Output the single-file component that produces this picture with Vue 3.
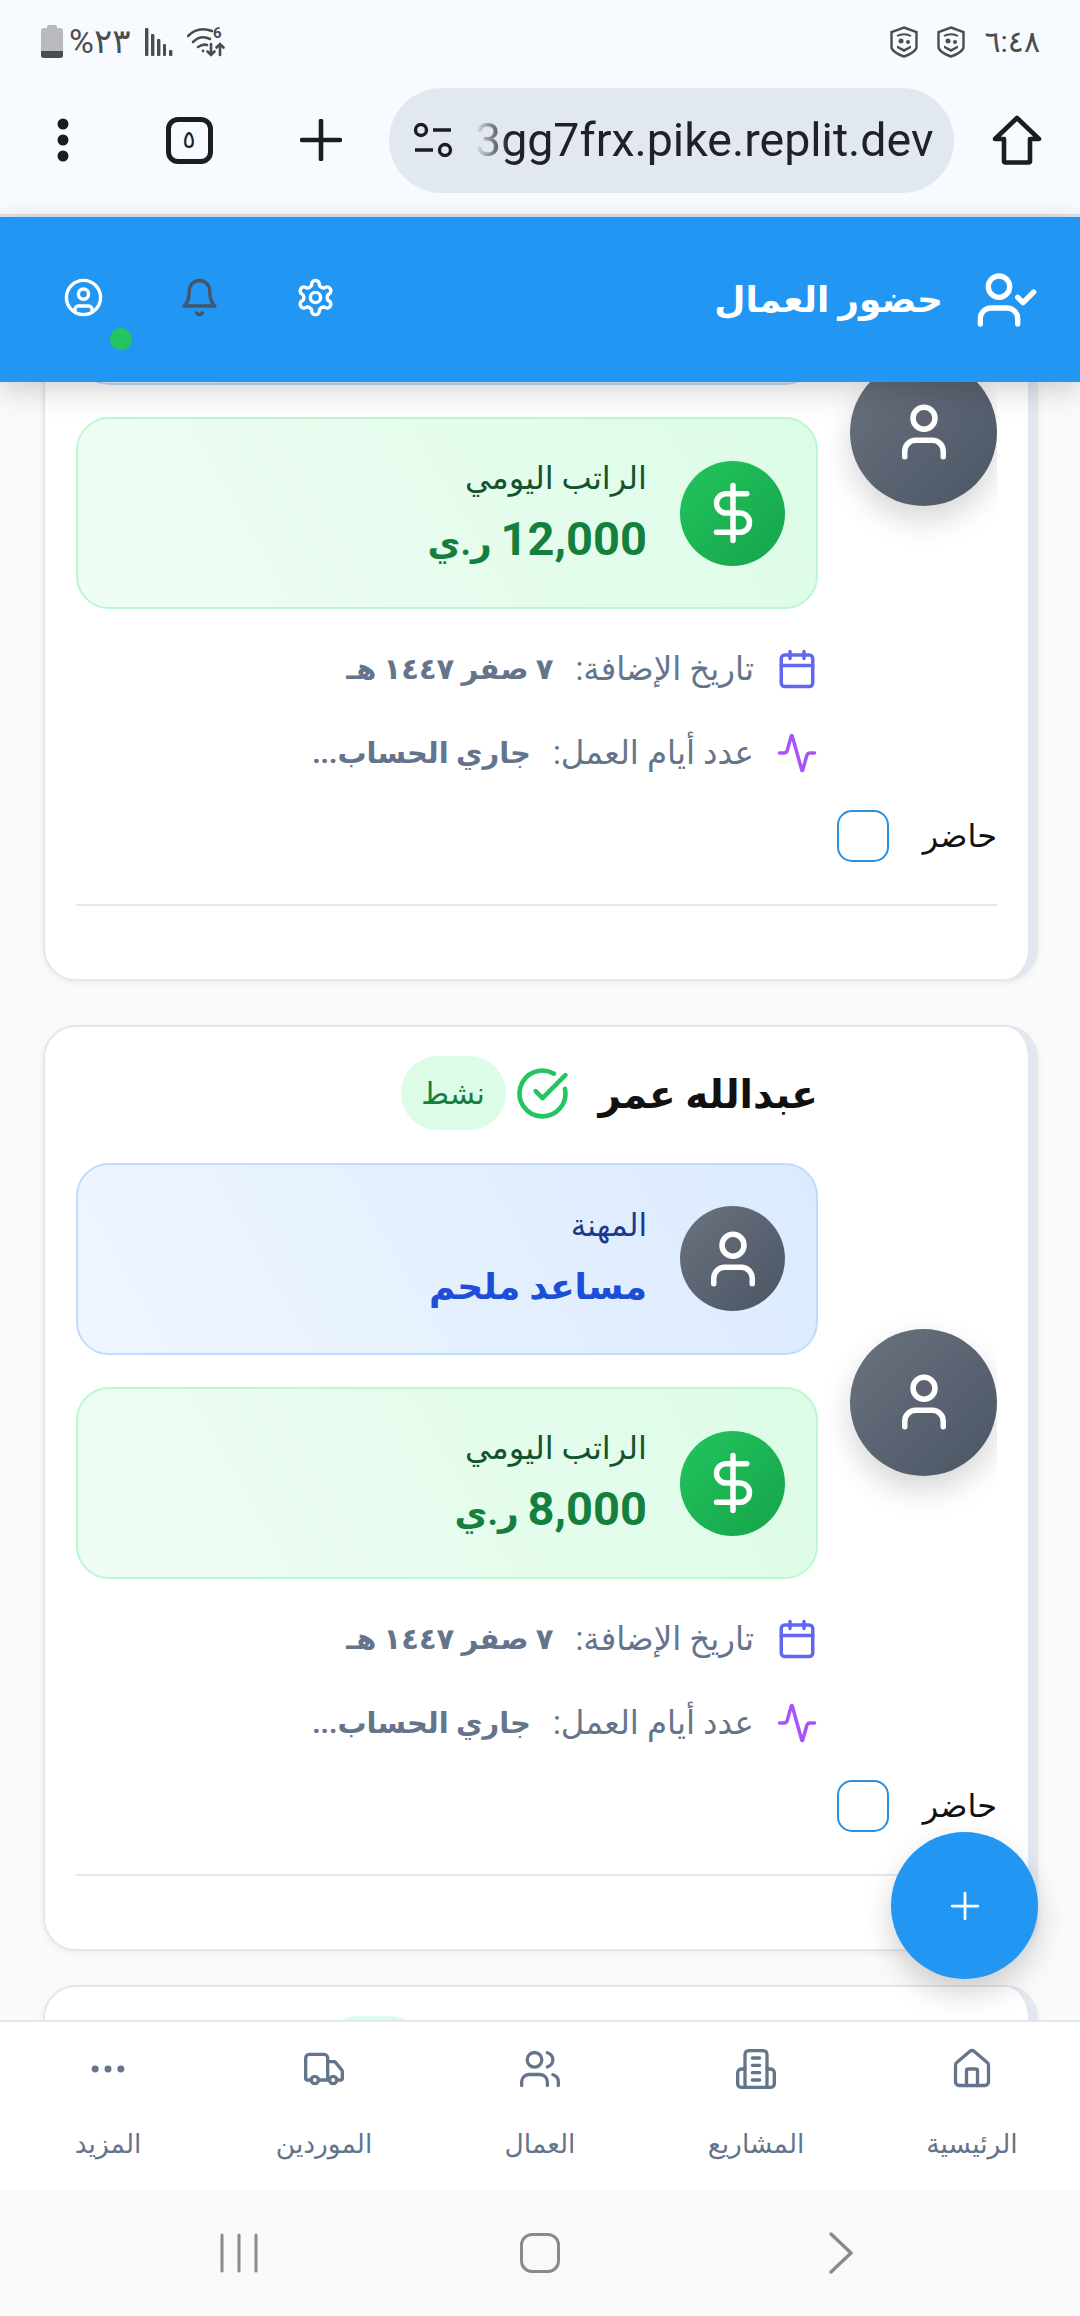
<template>
  <div class="phone">
    <!-- android status bar -->
    <div class="status-bar" dir="ltr">
      <div class="status-group">
        <svg class="battery" viewBox="0 0 22 33" width="22" height="33">
          <rect x="6" y="0" width="10" height="4" rx="1.5" fill="#b8babd" />
          <rect x="0" y="3" width="22" height="30" rx="3" fill="#b8babd" />
          <path d="M0 26h22v4a3 3 0 0 1-3 3H3a3 3 0 0 1-3-3z" fill="#4a4c4f" />
        </svg>
        <span class="status-text pct">%٢٣</span>
        <svg class="signal" viewBox="0 0 28 28" width="28" height="28" fill="#4a4c4f">
          <rect x="0" y="0" width="3.4" height="28" rx="1" />
          <rect x="6" y="6" width="3.4" height="22" rx="1" />
          <rect x="12" y="11" width="3.4" height="17" rx="1" />
          <rect x="18" y="16" width="3" height="12" rx="1" />
          <rect x="24" y="22" width="3.4" height="6" rx="1" />
        </svg>
        <svg class="wifi" viewBox="0 0 40 32" width="40" height="32" fill="none" stroke="#4a4c4f" stroke-width="2.6" stroke-linecap="round">
          <path d="M1 10C8 3 17 2 25 5" />
          <path d="M6 16c5-5 11-6 17-3" />
          <path d="M11 21c3-2 6-3 9-2" />
          <circle cx="16" cy="25" r="1.4" fill="#4a4c4f" stroke="none" />
          <path d="M24 18v11M20.500 25.500l3.500 3.500 3.500-3.500" />
          <path d="M33 29V18M29.500 21.500l3.500-3.500 3.500 3.500" />
          <text x="26" y="12" class="wifi-six">6</text>
        </svg>
      </div>
      <div class="status-group">
        <svg v-for="n in 2" :key="n" class="shield" viewBox="0 0 28 32" width="28" height="32" fill="none">
          <path d="M14 1.500 26.500 6v15c0 3-5 7-12.500 9.500C6.500 28 1.500 24 1.500 21V6z" stroke="#4a4c4f" stroke-width="2.400" />
          <path d="M7 10c4-2.500 10-2.500 14 0" stroke="#4a4c4f" stroke-width="2" />
          <circle cx="11" cy="15" r="2.500" fill="#4a4c4f" />
          <circle cx="18" cy="16" r="2" fill="#4a4c4f" />
          <path d="M7 19.500 14 23l7-3.500V22l-7 4-7-4z" fill="#4a4c4f" />
        </svg>
        <span class="status-text time">٦:٤٨</span>
      </div>
    </div>

    <!-- browser toolbar -->
    <div class="toolbar" dir="ltr">
      <div class="tool-slot">
        <svg viewBox="0 0 12 44" width="12" height="44" fill="#1b1d20">
          <circle cx="6" cy="6" r="5.500" />
          <circle cx="6" cy="22" r="5.500" />
          <circle cx="6" cy="38" r="5.500" />
        </svg>
      </div>
      <div class="tool-slot">
        <div class="tabs-count">٥</div>
      </div>
      <div class="tool-slot plus-slot">
        <svg viewBox="0 0 42 42" width="42" height="42" stroke="#1b1d20" stroke-width="4.600" stroke-linecap="round">
          <path d="M21 2v38M2 21h38" />
        </svg>
      </div>
      <div class="url-pill">
        <svg viewBox="0 0 40 34" width="40" height="34" fill="none" stroke="#1b1d20" stroke-width="3.400">
          <circle cx="8" cy="7" r="5.500" />
          <path d="M20 7h18M2 27h18" />
          <circle cx="32" cy="27" r="5.500" />
        </svg>
        <div class="url-text">3gg7frx.pike.replit.dev</div>
      </div>
      <div class="tool-slot">
        <svg viewBox="0 0 50 50" width="50" height="50" fill="none" stroke="#1b1d20" stroke-width="4.600" stroke-linejoin="round">
          <path d="M25 3 47 24H38V46a1.500 1.500 0 0 1-1.500 1.500H13.500A1.500 1.500 0 0 1 12 46V24H3z" />
        </svg>
      </div>
    </div>

    <!-- app bar -->
    <header class="app-header" dir="rtl">
      <div class="header-title">
        <svg class="lucide header-main-icon" viewBox="0 0 24 24">
          <path d="M16 21v-2a4 4 0 0 0-4-4H6a4 4 0 0 0-4 4v2" />
          <circle cx="9" cy="7" r="4" />
          <polyline points="16 11 18 13 22 9" />
        </svg>
        <h1>حضور العمال</h1>
      </div>
      <div class="header-actions">
        <svg class="lucide header-icon" viewBox="0 0 24 24">
          <path d="M12.220 2h-.44a2 2 0 0 0-2 2v.18a2 2 0 0 1-1 1.730l-.43.25a2 2 0 0 1-2 0l-.15-.08a2 2 0 0 0-2.730.73l-.22.38a2 2 0 0 0 .73 2.730l.15.1a2 2 0 0 1 1 1.720v.51a2 2 0 0 1-1 1.740l-.15.09a2 2 0 0 0-.73 2.730l.22.38a2 2 0 0 0 2.730.73l.15-.08a2 2 0 0 1 2 0l.43.25a2 2 0 0 1 1 1.730V20a2 2 0 0 0 2 2h.44a2 2 0 0 0 2-2v-.18a2 2 0 0 1 1-1.730l.43-.25a2 2 0 0 1 2 0l.15.08a2 2 0 0 0 2.730-.73l.22-.39a2 2 0 0 0-.73-2.730l-.15-.08a2 2 0 0 1-1-1.740v-.5a2 2 0 0 1 1-1.740l.15-.09a2 2 0 0 0 .73-2.730l-.22-.38a2 2 0 0 0-2.730-.73l-.15.08a2 2 0 0 1-2 0l-.43-.25a2 2 0 0 1-1-1.730V4a2 2 0 0 0-2-2z" />
          <circle cx="12" cy="12" r="3" />
        </svg>
        <svg class="lucide header-icon bell" viewBox="0 0 24 24">
          <path d="M6 8a6 6 0 0 1 12 0c0 7 3 9 3 9H3s3-2 3-9" />
          <path d="M10.300 21a1.940 1.940 0 0 0 3.400 0" />
        </svg>
        <div class="profile">
          <svg class="lucide header-icon" viewBox="0 0 24 24">
            <circle cx="12" cy="12" r="10" />
            <circle cx="12" cy="10" r="3" />
            <path d="M7 20.662V19a2 2 0 0 1 2-2h6a2 2 0 0 1 2 2v1.662" />
          </svg>
          <span class="online-dot"></span>
        </div>
      </div>
    </header>

    <!-- scrolled worker list -->
    <main class="content" dir="rtl">
      <div class="worker-list">
        <article v-for="worker in workers" :key="worker.id" class="worker-card">
          <div class="worker-main">
            <div class="avatar">
              <svg class="lucide avatar-icon" viewBox="0 0 24 24">
                <path d="M19 21v-2a4 4 0 0 0-4-4H9a4 4 0 0 0-4 4v2" />
                <circle cx="12" cy="7" r="4" />
              </svg>
            </div>
            <div class="worker-info">
              <div class="name-row">
                <h2>{{ worker.name }}</h2>
                <svg class="lucide check-icon" viewBox="0 0 24 24">
                  <path d="M21.801 10A10 10 0 1 1 17 3.335" />
                  <path d="m9 11 3 3L22 4" />
                </svg>
                <span class="badge">نشط</span>
              </div>

              <div class="info-box job-box">
                <div class="box-icon job-icon">
                  <svg class="lucide box-svg" viewBox="0 0 24 24">
                    <path d="M19 21v-2a4 4 0 0 0-4-4H9a4 4 0 0 0-4 4v2" />
                    <circle cx="12" cy="7" r="4" />
                  </svg>
                </div>
                <div class="box-text">
                  <p class="box-label job-label">المهنة</p>
                  <p class="box-value">{{ worker.job }}</p>
                </div>
              </div>

              <div class="info-box salary-box">
                <div class="box-icon salary-icon">
                  <svg class="lucide box-svg" viewBox="0 0 24 24">
                    <line x1="12" y1="2" x2="12" y2="22" />
                    <path d="M17 5H9.500a3.500 3.500 0 0 0 0 7h5a3.500 3.500 0 0 1 0 7H6" />
                  </svg>
                </div>
                <div class="box-text">
                  <p class="box-label">الراتب اليومي</p>
                  <p class="box-value"><span class="amount">{{ worker.salary }}</span> ر.ي</p>
                </div>
              </div>

              <div class="meta-row">
                <svg class="lucide meta-icon date-icon" viewBox="0 0 24 24">
                  <path d="M8 2v4M16 2v4" />
                  <rect x="3" y="4" width="18" height="18" rx="2" />
                  <path d="M3 10h18" />
                </svg>
                <span>تاريخ الإضافة:</span>
                <strong>٧ صفر ١٤٤٧ هـ</strong>
              </div>
              <div class="meta-row">
                <svg class="lucide meta-icon days-icon" viewBox="0 0 24 24">
                  <path d="M22 12h-2.480a2 2 0 0 0-1.930 1.460l-2.350 8.360a.25.25 0 0 1-.48 0L9.240 2.180a.25.25 0 0 0-.48 0l-2.350 8.360A2 2 0 0 1 4.490 12H2" />
                </svg>
                <span>عدد أيام العمل:</span>
                <strong>جاري الحساب...</strong>
              </div>
            </div>
          </div>

          <div class="present-row">
            <span>حاضر</span>
            <span class="checkbox"></span>
          </div>
          <div class="divider"></div>
        </article>
      </div>

      <button class="fab">
        <svg class="lucide fab-icon" viewBox="0 0 24 24">
          <path d="M5 12h14M12 5v14" />
        </svg>
      </button>
    </main>

    <!-- bottom tabs -->
    <nav class="bottom-nav" dir="rtl">
      <div class="nav-item">
        <svg class="lucide nav-icon" viewBox="0 0 24 24">
          <path d="M15 21v-8a1 1 0 0 0-1-1h-4a1 1 0 0 0-1 1v8" />
          <path d="M3 10a2 2 0 0 1 .709-1.528l7-5.999a2 2 0 0 1 2.582 0l7 5.999A2 2 0 0 1 21 10v9a2 2 0 0 1-2 2H5a2 2 0 0 1-2-2z" />
        </svg>
        <span>الرئيسية</span>
      </div>
      <div class="nav-item">
        <svg class="lucide nav-icon" viewBox="0 0 24 24">
          <path d="M6 22V4a2 2 0 0 1 2-2h8a2 2 0 0 1 2 2v18Z" />
          <path d="M6 12H4a2 2 0 0 0-2 2v6a2 2 0 0 0 2 2h2" />
          <path d="M18 12h2a2 2 0 0 1 2 2v6a2 2 0 0 1-2 2h-2" />
          <path d="M10 6h4M10 10h4M10 14h4M10 18h4" />
        </svg>
        <span>المشاريع</span>
      </div>
      <div class="nav-item">
        <svg class="lucide nav-icon" viewBox="0 0 24 24">
          <path d="M16 21v-2a4 4 0 0 0-4-4H6a4 4 0 0 0-4 4v2" />
          <circle cx="9" cy="7" r="4" />
          <path d="M22 21v-2a4 4 0 0 0-3-3.870" />
          <path d="M16 3.130a4 4 0 0 1 0 7.750" />
        </svg>
        <span>العمال</span>
      </div>
      <div class="nav-item">
        <svg class="lucide nav-icon" viewBox="0 0 24 24">
          <path d="M14 18V6a2 2 0 0 0-2-2H4a2 2 0 0 0-2 2v11a1 1 0 0 0 1 1h2" />
          <path d="M15 18H9" />
          <path d="M19 18h2a1 1 0 0 0 1-1v-3.650a1 1 0 0 0-.22-.624l-3.480-4.350A1 1 0 0 0 17.520 8H14" />
          <circle cx="17" cy="18" r="2" />
          <circle cx="7" cy="18" r="2" />
        </svg>
        <span>الموردين</span>
      </div>
      <div class="nav-item">
        <svg class="lucide nav-icon" viewBox="0 0 24 24">
          <circle cx="12" cy="12" r="1" />
          <circle cx="19" cy="12" r="1" />
          <circle cx="5" cy="12" r="1" />
        </svg>
        <span>المزيد</span>
      </div>
    </nav>

    <!-- android nav buttons -->
    <div class="system-nav">
      <svg viewBox="0 0 38 40" width="38" height="40" stroke="#8a8a8a" stroke-width="3" stroke-linecap="round">
        <path d="M2 2v36M19 2v36M36 2v36" />
      </svg>
      <span class="sys-home"></span>
      <svg class="sys-back" viewBox="0 0 28 42" width="28" height="42" fill="none" stroke="#8a8a8a" stroke-width="3.400" stroke-linecap="round" stroke-linejoin="round">
        <path d="M4 2l20 19L4 40" />
      </svg>
    </div>
  </div>
</template>

<script setup>
const workers = [
  { id: 1, name: 'محمد علي', job: 'عامل', salary: '12,000' },
  { id: 2, name: 'عبدالله عمر', job: 'مساعد ملحم', salary: '8,000' },
  { id: 3, name: 'عبدالرحمن سعد', job: 'عامل', salary: '8,000' }
]
</script>

<style>
html,
body {
  margin: 0;
  background: #fafafa;
}
</style>

<style scoped>
* {
  box-sizing: border-box;
}

.phone {
  width: 1080px;
  height: 2316px;
  display: flex;
  flex-direction: column;
  overflow: hidden;
  position: relative;
  background: #fafafa;
  font-family: Roboto, "DejaVu Sans", sans-serif;
}

.lucide {
  fill: none;
  stroke: currentColor;
  stroke-width: 2;
  stroke-linecap: round;
  stroke-linejoin: round;
  flex-shrink: 0;
}

/* status bar */
.status-bar {
  height: 70px;
  flex-shrink: 0;
  display: flex;
  align-items: center;
  justify-content: space-between;
  padding: 13px 40px 0 41px;
  background: #f7faff;
}

.status-group {
  display: flex;
  align-items: center;
}

.status-text {
  font-size: 34px;
  color: #4a4c4f;
  line-height: 1.3;
}

.pct {
  margin-left: 6px;
  margin-right: 15px;
  white-space: nowrap;
}

.signal {
  margin-right: 14px;
}

.wifi-six {
  font-size: 15px;
  font-weight: 700;
  fill: #4a4c4f;
  stroke: none;
  font-family: Roboto, sans-serif;
}

.shield {
  margin-left: 19px;
}

.shield:first-child {
  margin-left: 0;
}

.time {
  margin-left: 19px;
  font-size: 30px;
}

/* chrome toolbar */
.toolbar {
  height: 147px;
  flex-shrink: 0;
  display: flex;
  align-items: center;
  padding-bottom: 4px;
  background: #f7faff;
  border-bottom: 3px solid #d8e4ee;
}

.tool-slot {
  width: 126px;
  display: flex;
  justify-content: center;
}

.plus-slot {
  width: 137px;
}

.tabs-count {
  width: 47px;
  height: 47px;
  border: 5px solid #1b1d20;
  border-radius: 12px;
  display: flex;
  align-items: center;
  justify-content: center;
  font-size: 24px;
  color: #1b1d20;
  line-height: 1;
}

.url-pill {
  width: 565px;
  height: 105px;
  flex-shrink: 0;
  display: flex;
  align-items: center;
  padding-left: 24px;
  border-radius: 53px;
  background: #e2e8f0;
}

.url-text {
  width: 460px;
  margin-left: 22px;
  overflow: hidden;
  font-size: 46.500px;
  line-height: 64px;
  color: #1f2125;
  white-space: nowrap;
  -webkit-mask-image: linear-gradient(to right, transparent, #000 34px);
  mask-image: linear-gradient(to right, transparent, #000 34px);
}

/* app header */
.app-header {
  height: 165px;
  flex-shrink: 0;
  display: flex;
  align-items: center;
  justify-content: space-between;
  padding: 0 41px 0 63px;
  background: #2196f3;
  box-shadow: 0 8px 28px rgba(0, 0, 0, 0.18);
  position: relative;
  z-index: 2;
  color: #fff;
}

.header-title {
  display: flex;
  align-items: center;
  gap: 32px;
}

.header-title h1 {
  margin: 0;
  font-size: 36px;
  font-weight: 700;
}

.header-main-icon {
  width: 64px;
  height: 64px;
}

.header-actions {
  display: flex;
  align-items: center;
  gap: 75px;
  padding-bottom: 5px;
}

.header-icon {
  width: 41px;
  height: 41px;
  display: block;
}

.bell {
  color: #475569;
}

.profile {
  position: relative;
}

.online-dot {
  position: absolute;
  left: 47px;
  top: 51px;
  width: 22px;
  height: 22px;
  border-radius: 50%;
  background: #22c55e;
}

/* list */
.content {
  flex: 1;
  min-height: 0;
  position: relative;
  overflow: hidden;
}

.worker-list {
  margin-top: -327px;
  padding: 0 42px 0 43px;
}

.worker-card {
  height: 926px;
  margin-bottom: 34px;
  padding: 29px 31px 0;
  background: #fff;
  border: 2px solid #e2e8f0;
  border-right-width: 10px;
  border-radius: 33px;
  box-shadow: 0 2px 6px rgba(0, 0, 0, 0.06);
}

.worker-card:first-child {
  margin-bottom: 44px;
}

.worker-main {
  display: flex;
  align-items: center;
  gap: 32px;
  overflow: hidden;
}

.avatar {
  width: 147px;
  height: 147px;
  flex-shrink: 0;
  display: flex;
  align-items: center;
  justify-content: center;
  border-radius: 50%;
  background: linear-gradient(135deg, #6b7280, #4b5563);
  box-shadow: 0 14px 30px rgba(0, 0, 0, 0.16);
  color: #fff;
}

.avatar-icon {
  width: 66px;
  height: 66px;
}

.worker-info {
  flex: 1;
  min-width: 0;
  display: flex;
  flex-direction: column;
  gap: 32.500px;
}

.name-row {
  height: 74px;
  display: flex;
  align-items: center;
}

.name-row h2 {
  margin: 4px 0 0;
  font-size: 39px;
  font-weight: 700;
  color: #111;
  white-space: nowrap;
}

.check-icon {
  width: 55px;
  height: 55px;
  margin: 0 29px 0 9px;
  color: #22c55e;
}

.badge {
  width: 105px;
  height: 74px;
  display: flex;
  align-items: center;
  justify-content: center;
  border-radius: 37px;
  background: #dcfce7;
  color: #15803d;
  font-size: 30px;
}

.info-box {
  height: 192px;
  display: flex;
  align-items: center;
  gap: 33px;
  padding: 0 31px;
  border-radius: 33px;
  border: 2px solid;
}

.info-box p {
  margin: 0;
}

.box-text {
  padding-top: 3px;
}

.job-box {
  background: linear-gradient(60deg, #eff6ff, #dbeafe);
  border-color: #bfdbfe;
}

.job-box .box-label {
  color: #1e3a8a;
}

.job-box .box-value {
  color: #1d4ed8;
}

.salary-box {
  background: linear-gradient(60deg, #f0fdf4, #dcfce7);
  border-color: #bbf7d0;
}

.salary-box .box-label {
  color: #14532d;
}

.salary-box .box-value {
  color: #15803d;
}

.box-icon {
  width: 105px;
  height: 105px;
  flex-shrink: 0;
  display: flex;
  align-items: center;
  justify-content: center;
  border-radius: 50%;
  color: #fff;
}

.job-icon {
  background: linear-gradient(135deg, #6b7280, #4b5563);
}

.salary-icon {
  background: linear-gradient(135deg, #22c55e, #16a34a);
}

.box-svg {
  width: 66px;
  height: 66px;
}

.box-label {
  font-size: 32px;
  font-weight: 500;
  line-height: 44px;
}

.job-label {
  font-size: 31px;
}

.box-value {
  margin-top: 9px !important;
  font-size: 36px;
  font-weight: 700;
  line-height: 60px;
}

.amount {
  font-size: 47px;
}

.meta-row {
  height: 52px;
  display: flex;
  align-items: center;
  gap: 22px;
  padding-top: 2px;
  font-size: 32.500px;
  color: #64748b;
}

.meta-row strong {
  font-size: 29px;
  color: #64748b;
  font-weight: 700;
}

.meta-icon {
  width: 42px;
  height: 42px;
}

.date-icon {
  color: #6366f1;
}

.days-icon {
  color: #a855f7;
}

.present-row {
  display: flex;
  align-items: center;
  gap: 34px;
  margin-top: 32px;
  font-size: 32px;
  color: #111;
}

.checkbox {
  width: 52px;
  height: 52px;
  border: 2px solid #2a8fdc;
  border-radius: 15px;
  background: #fff;
}

.divider {
  height: 2px;
  margin-top: 42px;
  background: #e2e8f0;
}

.fab {
  position: absolute;
  left: 891px;
  bottom: 41px;
  width: 147px;
  height: 147px;
  display: flex;
  align-items: center;
  justify-content: center;
  padding: 0;
  border: 0;
  border-radius: 50%;
  background: #2196f3;
  box-shadow: 0 14px 30px rgba(0, 0, 0, 0.18);
  color: #fff;
}

.fab-icon {
  width: 44px;
  height: 44px;
  stroke-width: 1.500;
}

/* bottom nav */
.bottom-nav {
  height: 170px;
  flex-shrink: 0;
  display: grid;
  grid-template-columns: repeat(5, 216px);
  border-top: 2px solid #e2e8f0;
  background: #fff;
  position: relative;
}

.nav-item {
  display: flex;
  flex-direction: column;
  align-items: center;
  padding-top: 25px;
  gap: 35px;
  color: #64748b;
  font-size: 26.500px;
  line-height: 36px;
}

.nav-icon {
  width: 44px;
  height: 44px;
  stroke-width: 1.800;
}

/* system nav */
.system-nav {
  height: 126px;
  flex-shrink: 0;
  display: flex;
  align-items: center;
  justify-content: center;
  gap: 262px;
  padding-right: 5px;
  background: #f9f9f9;
}

.sys-home {
  width: 40px;
  height: 40px;
  border: 3.500px solid #8a8a8a;
  border-radius: 12px;
}

.sys-back {
  margin-left: 5px;
}
</style>
